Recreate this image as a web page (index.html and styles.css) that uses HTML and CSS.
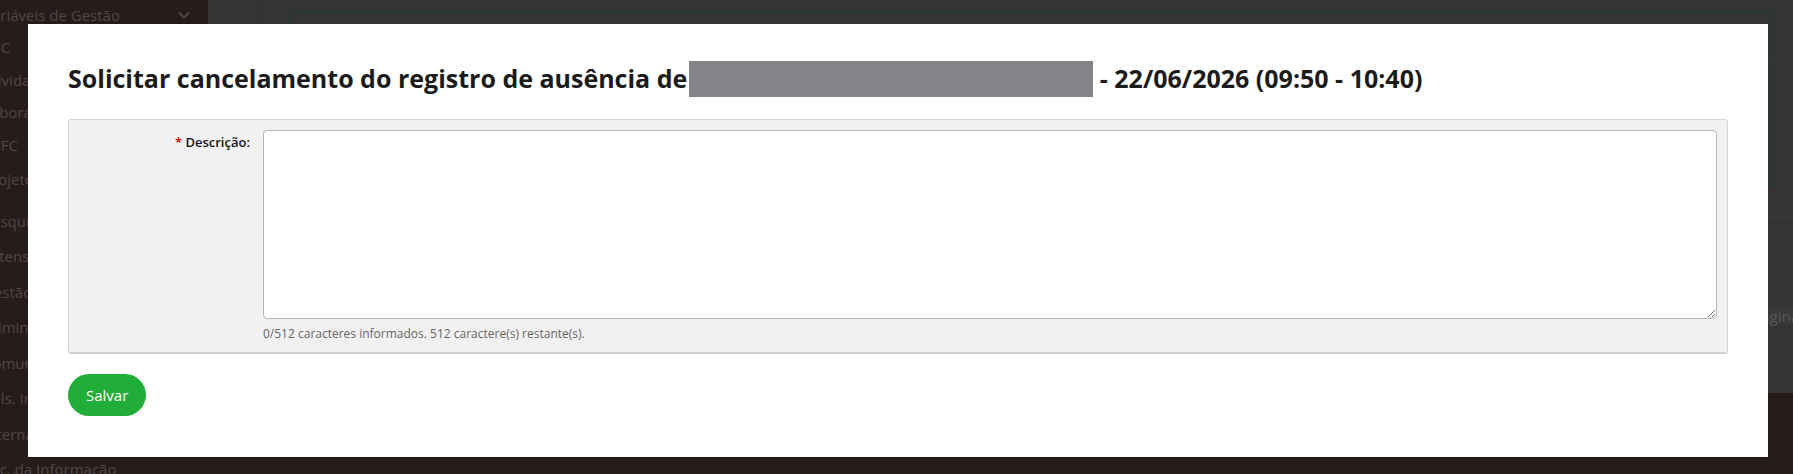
FILE: index.html
```html
<!DOCTYPE html>
<html lang="pt-BR">
<head>
<meta charset="utf-8">
<title>Solicitar cancelamento</title>
<link rel="stylesheet" href="styles.css">
</head>
<body>
<div class="app">
  <aside class="sidebar">
    <div class="nav-item first">
      <span class="nav-text">Variáveis de Gestão</span>
      <svg class="chev" width="12" height="8" viewBox="0 0 12 8"><polyline points="1,1.5 6,6.5 11,1.5" fill="none" stroke="#4f4746" stroke-width="2"/></svg>
    </div>
    <div class="nav-item"><span class="nav-text">TCC</span></div>
    <div class="nav-item"><span class="nav-text">Atividades</span></div>
    <div class="nav-item"><span class="nav-text">Laboratórios</span></div>
    <div class="nav-item"><span class="nav-text">ATFC</span></div>
    <div class="nav-item projects"><span class="nav-text">Projetos</span></div>
    <div class="nav-item tall"><span class="nav-text">Pesquisa</span></div>
    <div class="nav-item tall"><span class="nav-text">Extensão</span></div>
    <div class="nav-item tall"><span class="nav-text">Gestão</span></div>
    <div class="nav-item tall"><span class="nav-text">Administração</span></div>
    <div class="nav-item tall"><span class="nav-text">Comunicação</span></div>
    <div class="nav-item tall"><span class="nav-text">Rels. Institucionais</span></div>
    <div class="nav-item tall"><span class="nav-text">Internacional</span></div>
    <div class="nav-item tall"><span class="nav-text">Tec. da Informação</span></div>
  </aside>
  <div class="main">
    <div class="main-top">
      <div class="gutter"></div>
      <div class="content">
        <div class="card">
          <div class="card-head"></div>
          <div class="card-body"></div>
        </div>
        <div class="rule"></div>
        <div class="pager"><span class="pager-label">Página</span></div>
      </div>
    </div>
    <footer class="footer"></footer>
  </div>
</div>

<div class="modal">
  <h2 class="modal-title">Solicitar cancelamento do registro de ausência de<span class="redacted"></span> - 22/06/2026 (09:50 - 10:40)</h2>
  <div class="form-panel">
    <div class="form-row">
      <label class="form-label" for="descricao"><span class="req">*</span> Descrição:</label>
      <div class="form-field">
        <textarea id="descricao" class="form-textarea"></textarea>
        <div class="counter">0/512 caracteres informados. 512 caractere(s) restante(s).</div>
      </div>
    </div>
  </div>
  <button class="btn-save" type="button">Salvar</button>
</div>
</body>
</html>
```

FILE: styles.css
```css
* { box-sizing: border-box; }

html, body {
  margin: 0;
  padding: 0;
  width: 1793px;
  height: 474px;
  overflow: hidden;
  font-family: "Open Sans", "Liberation Sans", sans-serif;
  background: #343434;
}

.app {
  display: flex;
  height: 474px;
}

/* Sidebar (dimmed behind modal) */
.sidebar {
  width: 208px;
  flex: none;
  background: #261c1b;
  display: flex;
  flex-direction: column;
  overflow: hidden;
}

.nav-item {
  height: 32.6px;
  flex: none;
  display: flex;
  align-items: center;
  justify-content: space-between;
  padding-right: 18px;
  color: #4f4746;
  font-size: 15px;
  white-space: nowrap;
}

.nav-item.first { margin-top: -1.6px; }
.nav-item.projects { height: 41.85px; align-items: flex-start; padding-top: 8px; }
.nav-item.tall { height: 35.5px; }

.nav-text { margin-left: -17px; }

.chev { flex: none; }

/* Main area behind modal */
.main {
  flex: 1;
  display: flex;
  flex-direction: column;
  background: #343434;
}

.main-top {
  height: 393px;
  flex: none;
  display: flex;
}

.gutter {
  width: 50px;
  flex: none;
  background: #363636;
  border-right: 1px solid #2f2f2f;
}

.content {
  flex: 1;
  display: flex;
  flex-direction: column;
  overflow: hidden;
}

.card {
  margin: 12px 17px 0 31px;
  height: 174px;
  flex: none;
  border: 1px solid #1f3b2f;
  border-radius: 5px;
  display: flex;
  flex-direction: column;
}

.card-head {
  height: 48px;
  border-bottom: 1px solid #2a3d34;
}

.rule {
  margin-top: 31px;
  height: 1px;
  flex: none;
  background: #3d3d3d;
}

.pager {
  margin-top: 89px;
  height: 18px;
  flex: none;
  background: #393939;
  display: flex;
  justify-content: flex-end;
  align-items: center;
  font-size: 15px;
  color: #575757;
  white-space: nowrap;
}

.pager-label { margin-right: -6px; }

.footer {
  flex: 1;
  background: #261c1b;
}

/* Modal */
.modal {
  position: absolute;
  left: 28px;
  top: 24px;
  width: 1740px;
  height: 433px;
  background: #ffffff;
  padding: 37px 40px 0 40px;
}

.modal-title {
  margin: 0 0 22px 0;
  font-size: 25px;
  font-weight: 700;
  line-height: 35.5px;
  color: #1b1b1b;
  white-space: nowrap;
}

.redacted {
  display: inline-block;
  vertical-align: top;
  width: 404px;
  height: 35.5px;
  margin-left: 2px;
  background: #848488;
}

.form-panel {
  background: #f1f1f1;
  border: 1px solid #d4d4d4;
  border-radius: 3px;
  box-shadow: 0 1px 0 #cdcdcd;
  padding: 10px 10px 10px 0;
}

.form-row {
  display: grid;
  grid-template-columns: 181px 1fr;
  column-gap: 13px;
}

.form-label {
  text-align: right;
  font-size: 13px;
  line-height: 18px;
  font-weight: 600;
  color: #161616;
  padding-top: 3px;
}

.req { color: #cc0000; }

.form-field {
  display: flex;
  flex-direction: column;
}

.form-textarea {
  display: block;
  width: 100%;
  height: 189px;
  border: 1px solid #b5b5b5;
  border-radius: 4px;
  background: #ffffff;
  font-family: "Open Sans", "Liberation Sans", sans-serif;
  font-size: 13px;
  margin: 0;
  padding: 4px 6px;
  resize: vertical;
}

.counter {
  margin-top: 7px;
  font-size: 12px;
  line-height: 16px;
  color: #666666;
}

.btn-save {
  margin-top: 21px;
  height: 42px;
  padding: 0 18px;
  border: none;
  border-radius: 21px;
  background: #21ae38;
  color: #ffffff;
  font-family: "Open Sans", "Liberation Sans", sans-serif;
  font-size: 15px;
  cursor: pointer;
}
```
